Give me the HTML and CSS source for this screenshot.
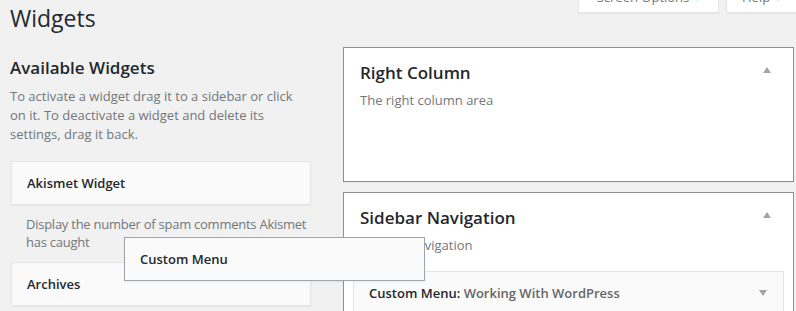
FILE: index.html
```html
<!DOCTYPE html>
<html lang="en">
<head>
<meta charset="utf-8">
<title>Widgets</title>
<link rel="stylesheet" href="styles.css">
</head>
<body>
<div class="wrap">
  <div class="header">
    <h1 class="title">Widgets</h1>
    <div class="screen-meta">
      <button class="meta-tab meta-tab-options">Screen Options <span class="caret">▾</span></button>
      <button class="meta-tab meta-tab-help">Help <span class="caret">▾</span></button>
    </div>
  </div>
  <div class="columns">
    <div class="col-left">
      <h2 class="section-title">Available Widgets</h2>
      <p class="section-desc">To activate a widget drag it to a sidebar or click on it. To deactivate a widget and delete its settings, drag it back.</p>
      <div class="widget-item">
        <div class="widget-top"><span class="widget-title">Akismet Widget</span></div>
        <p class="widget-desc">Display the number of spam comments Akismet has caught</p>
      </div>
      <div class="widget-item">
        <div class="widget-top"><span class="widget-title">Archives</span></div>
      </div>
    </div>
    <div class="col-right">
      <div class="sidebar-box">
        <div class="sidebar-head">
          <h3 class="sidebar-title">Right Column</h3>
          <span class="arrow-up"></span>
        </div>
        <p class="sidebar-desc">The right column area</p>
        <div class="widget-list widget-list-empty"></div>
      </div>
      <div class="sidebar-box">
        <div class="sidebar-head">
          <h3 class="sidebar-title">Sidebar Navigation</h3>
          <span class="arrow-up"></span>
        </div>
        <p class="sidebar-desc">Sidebar navigation</p>
        <div class="widget-list">
          <div class="widget-top widget-top-inner">
            <span class="widget-title">Custom Menu<span class="colon">:</span> <span class="in-title">Working With WordPress</span></span>
            <span class="arrow-down"></span>
          </div>
        </div>
      </div>
    </div>
  </div>
</div>
<div class="drag-helper"><span class="widget-title">Custom Menu</span></div>
</body>
</html>
```
FILE: styles.css
```css
html { overflow: hidden; }
body {
  margin: 0;
  background: #f1f1f1;
  font-family: "Open Sans", "Noto Sans", sans-serif;
  font-size: 13px;
  color: #23282d;
  position: relative;
  height: 311px;
}
.wrap { padding: 0 0 0 10px; }
.header {
  display: flex;
  justify-content: space-between;
  align-items: flex-start;
  height: 47px;
}
.title {
  margin: 0;
  padding-top: 3px;
  font-size: 23px;
  font-weight: 400;
  line-height: 30px;
  color: #23282d;
}
.screen-meta {
  display: flex;
  gap: 7px;
  margin-top: -14px;
  margin-right: -70px;
}
.meta-tab {
  font-family: inherit;
  font-size: 13px;
  color: #72777c;
  background: #fff;
  border: 1px solid #e5e5e5;
  border-top: 0;
  box-shadow: 0 1px 1px rgba(0,0,0,0.04);
  height: 27px;
  line-height: 22px;
  padding: 0 16px 0 16px;
  display: flex;
  align-items: flex-start;
  gap: 6px;
}
.meta-tab-options { width: 141px; justify-content: center; }
.meta-tab-help { width: 140px; padding-left: 15px; }
.caret { font-size: 10px; color: #a0a5aa; }
.columns {
  display: flex;
  gap: 32px;
  align-items: flex-start;
}
.col-left { width: 301px; padding-top: 9px; }
.section-title {
  margin: 0;
  font-size: 17px;
  font-weight: 600;
  line-height: 24px;
  color: #23282d;
}
.section-desc {
  margin: 7px 0 0;
  line-height: 19px;
  color: #72777c;
}
.widget-item { margin: 17px 0 0 1px; }
.widget-item + .widget-item { margin-top: 11px; }
.widget-top {
  height: 42px;
  background: #fafafa;
  border: 1px solid #e5e5e5;
  box-shadow: 0 1px 1px rgba(0,0,0,0.04);
  padding: 0 15px;
  display: flex;
  align-items: center;
  justify-content: space-between;
}
.widget-title {
  font-weight: 600;
  font-size: 13px;
  line-height: 42px;
  color: #23282d;
}
.in-title { color: #666; }
.widget-desc {
  margin: 10px 0 0;
  padding: 0 1px 0 15px;
  line-height: 18px;
  letter-spacing: -0.25px;
  color: #72777c;
}
.col-right { width: 451px; }
.sidebar-box {
  background: #fff;
  border: 1px solid #8c8f94;
  padding: 13px 9px 15px;
  box-shadow: 0 1px 1px rgba(0,0,0,0.04);
}
.sidebar-box + .sidebar-box { margin-top: 10px; }
.sidebar-head {
  display: flex;
  justify-content: space-between;
  align-items: center;
  padding: 0 13px 0 7px;
}
.sidebar-title {
  margin: 0;
  font-size: 17px;
  font-weight: 600;
  line-height: 24px;
  color: #23282d;
}
.arrow-up {
  width: 0; height: 0;
  border-left: 4px solid transparent;
  border-right: 4px solid transparent;
  border-bottom: 6px solid #a0a5aa;
  margin-top: -6px;
}
.arrow-down {
  width: 0; height: 0;
  border-left: 4px solid transparent;
  border-right: 4px solid transparent;
  border-top: 6px solid #a0a5aa;
  margin-right: 1px;
}
.sidebar-desc {
  margin: 6px 0 0;
  padding: 0 7px;
  line-height: 19px;
  color: #72777c;
}
.widget-list { margin-top: 16px; }
.widget-list-empty { min-height: 40px; }
.drag-helper {
  position: absolute;
  left: 124px;
  top: 237px;
  width: 269px;
  height: 42px;
  padding: 0 15px;
  background: #fafafa;
  border: 1px solid #a0a5aa;
  box-shadow: 0 1px 2px rgba(0,0,0,0.06);
}
```
